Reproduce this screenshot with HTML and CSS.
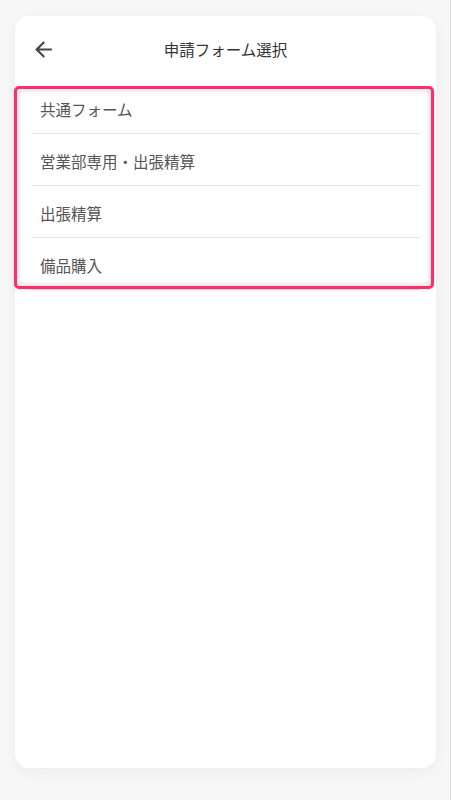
FILE: index.html
```html
<!DOCTYPE html>
<html lang="ja">
<head>
<meta charset="utf-8">
<link rel="stylesheet" href="styles.css">
</head>
<body>
<div class="page">
  <div class="card">
    <header class="header">
      <button class="back" aria-label="戻る">
        <svg viewBox="0 0 24 24" width="25" height="25"><path d="M20 11H7.83l5.59-5.59L12 4l-8 8 8 8 1.41-1.41L7.83 13H20v-2z" fill="#444"/></svg>
      </button>
      <h1 class="title">申請フォーム選択</h1>
    </header>
    <ul class="list">
      <li class="item">共通フォーム</li>
      <li class="item">営業部専用・出張精算</li>
      <li class="item">出張精算</li>
      <li class="item">備品購入</li>
      <div class="highlight"></div>
    </ul>
  </div>
</div>
</body>
</html>
```

FILE: styles.css
```css
html, body {
  margin: 0;
  padding: 0;
}
body {
  background: #f7f7f7;
  font-family: "Noto Sans CJK JP", "Noto Sans", sans-serif;
  width: 450px;
  height: 800px;
  border-right: 1px solid #dcdcdc;
  overflow: hidden;
}
.page {
  padding: 16px 14px 0 15px;
}
.card {
  background: #fff;
  border-radius: 14px;
  height: 752px;
  box-shadow: 0 4px 14px rgba(0, 0, 0, 0.05);
}
.header {
  position: relative;
  height: 66px;
  display: flex;
  align-items: center;
  justify-content: center;
}
.back {
  position: absolute;
  left: 16px;
  top: 21px;
  width: 25px;
  height: 25px;
  padding: 0;
  border: 0;
  background: none;
  display: flex;
}
.title {
  margin: 0;
  font-size: 15.5px;
  font-weight: 400;
  color: #333;
  line-height: 20px;
}
.list {
  position: relative;
  list-style: none;
  margin: 0 17px 0 16px;
  padding: 0;
}
.item {
  height: 51px;
  border-bottom: 1px solid #e2e2e2;
  display: flex;
  align-items: center;
  padding: 3px 0 0 9px;
  box-sizing: border-box;
  height: 52px;
  font-size: 15.5px;
  color: #555;
}
.highlight {
  position: absolute;
  left: -17px;
  top: 4px;
  right: -15px;
  bottom: 1px;
  border: 3px solid #ff2d6b;
  border-radius: 5px;
  box-shadow: inset 0 0 6px rgba(0, 0, 0, 0.22), 0 1px 3px rgba(0, 0, 0, 0.12);
  pointer-events: none;
}
```
